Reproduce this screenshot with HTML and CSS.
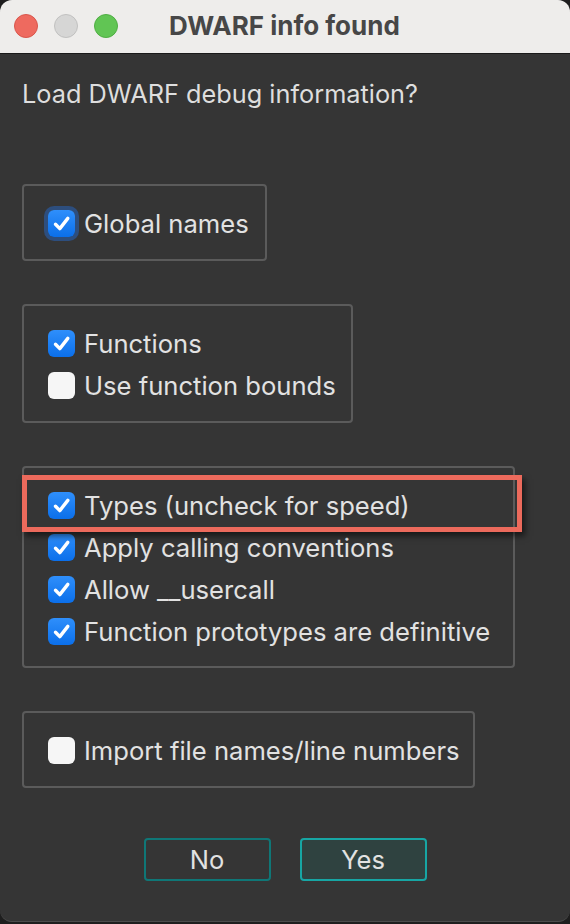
FILE: index.html
```html
<!DOCTYPE html>
<html>
<head>
<meta charset="utf-8">
<link rel="stylesheet" href="styles.css">
</head>
<body>
<div class="window">
  <div class="titlebar">
    <div class="lights">
      <span class="light red"></span>
      <span class="light gray"></span>
      <span class="light green"></span>
    </div>
    <div class="title">DWARF info found</div>
  </div>
  <div class="content">
    <p class="prompt">Load DWARF debug information?</p>

    <div class="group g1">
      <div class="row"><span class="cb on focus"><svg viewBox="0 0 27 27"><path d="M7.5 14.2 L11.8 18.6 L19.8 8.4"/></svg></span><span class="label">Global names</span></div>
    </div>

    <div class="group g2">
      <div class="row"><span class="cb on"><svg viewBox="0 0 27 27"><path d="M7.5 14.2 L11.8 18.6 L19.8 8.4"/></svg></span><span class="label">Functions</span></div>
      <div class="row"><span class="cb"></span><span class="label">Use function bounds</span></div>
    </div>

    <div class="group g3">
      <div class="row highlighted"><span class="cb on"><svg viewBox="0 0 27 27"><path d="M7.5 14.2 L11.8 18.6 L19.8 8.4"/></svg></span><span class="label">Types (uncheck for speed)</span><span class="mark"></span></div>
      <div class="row"><span class="cb on"><svg viewBox="0 0 27 27"><path d="M7.5 14.2 L11.8 18.6 L19.8 8.4"/></svg></span><span class="label">Apply calling conventions</span></div>
      <div class="row"><span class="cb on"><svg viewBox="0 0 27 27"><path d="M7.5 14.2 L11.8 18.6 L19.8 8.4"/></svg></span><span class="label">Allow __usercall</span></div>
      <div class="row"><span class="cb on"><svg viewBox="0 0 27 27"><path d="M7.5 14.2 L11.8 18.6 L19.8 8.4"/></svg></span><span class="label">Function prototypes are definitive</span></div>
    </div>

    <div class="group g4">
      <div class="row"><span class="cb"></span><span class="label">Import file names/line numbers</span></div>
    </div>

    <div class="buttons">
      <button class="btn">No</button>
      <button class="btn primary">Yes</button>
    </div>
  </div>
</div>
</body>
</html>
```

FILE: styles.css
```css
html, body {
  margin: 0;
  padding: 0;
  background: #1e1e1e;
}
body {
  width: 570px;
  height: 924px;
  font-family: Inter, "Noto Sans", "Liberation Sans", sans-serif;
}
.window {
  width: 570px;
  height: 922px;
  box-sizing: border-box;
  background: #353535;
  border-radius: 12px;
  border-bottom: 1px solid #4c4c4c;
  overflow: hidden;
  display: flex;
  flex-direction: column;
}
.titlebar {
  height: 54px;
  flex: none;
  background: #eeedeb;
  display: flex;
  align-items: center;
  border-bottom: 1px solid #1a1a1a;
  box-sizing: border-box;
}
.lights {
  display: flex;
  gap: 16px;
  margin-left: 14px;
  margin-top: -1px;
}
.light {
  width: 24px;
  height: 24px;
  border-radius: 50%;
  box-sizing: border-box;
}
.light.red { background: #ee6a5f; border: 1px solid #d9564c; }
.light.gray { background: #d6d6d5; border: 1px solid #c1c1c0; }
.light.green { background: #61c554; border: 1px solid #4fae43; }
.title {
  margin-left: 51px;
  font-size: 26px;
  font-weight: 700;
  color: #474747;
  margin-top: -2px;
}
.content {
  padding: 25px 0 0 22px;
  display: flex;
  flex-direction: column;
  align-items: flex-start;
}
.prompt {
  margin: 0 0 75px;
  font-size: 25.3px;
  line-height: 30px;
  color: #dedede;
}
.group {
  box-sizing: border-box;
  border: 2px solid #5b5b5b;
  border-radius: 4px;
  padding: 16px 0 15px 24px;
  margin-bottom: 43px;
}
.g1 { width: 245px; }
.g2 { width: 331px; padding-bottom: 14px; }
.g3 { width: 493px; padding-bottom: 13px; }
.g4 { width: 453px; margin-bottom: 50px; }
.row {
  height: 42.3px;
  display: flex;
  align-items: center;
  gap: 9px;
}
.label {
  font-size: 25.6px;
  color: #e2e2e2;
  white-space: nowrap;
}
.cb {
  width: 27px;
  height: 27px;
  flex: none;
  border-radius: 6px;
  background: #f6f6f6;
  display: flex;
  align-items: center;
  justify-content: center;
}
.cb.on {
  background: linear-gradient(#2f8ffb, #0b6fea);
}
.cb svg {
  width: 27px;
  height: 27px;
}
.cb svg path {
  fill: none;
  stroke: #ffffff;
  stroke-width: 3.4;
  stroke-linecap: round;
  stroke-linejoin: round;
}
.cb.focus {
  box-shadow: 0 0 0 4px rgba(38, 98, 185, 0.55);
}
.highlighted {
  position: relative;
}
.mark {
  position: absolute;
  left: -26px;
  top: -9px;
  width: 500px;
  height: 57px;
  box-sizing: border-box;
  border: 5px solid #ec6a5c;
  box-shadow: 3px 4px 6px rgba(0, 0, 0, 0.55);
}
.buttons {
  align-self: stretch;
  margin-left: -22px;
  display: flex;
  justify-content: center;
  gap: 29px;
}
.btn {
  width: 127px;
  height: 43px;
  box-sizing: border-box;
  border: 2px solid #0f7777;
  border-radius: 4px;
  background: #353535;
  color: #e2e2e2;
  font-family: inherit;
  font-size: 25.5px;
  padding: 0;
}
.btn.primary {
  background: #2f4240;
  border-color: #17a6a4;
}
```
